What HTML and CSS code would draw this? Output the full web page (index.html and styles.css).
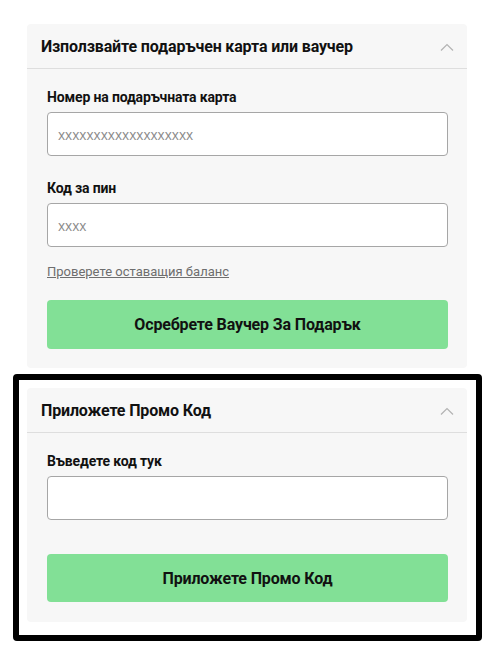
FILE: index.html
```html
<!DOCTYPE html>
<html lang="bg">
<head>
<meta charset="utf-8">
<link rel="stylesheet" href="styles.css">
</head>
<body>
<div class="page">
  <section class="card card-gift">
    <div class="card-header">
      <h2 class="card-title">Използвайте подаръчен карта или ваучер</h2>
      <svg class="chevron" width="14" height="8" viewBox="0 0 14 8"><path d="M1 7.5 L7 1.5 L13 7.5" fill="none" stroke="#b3b3b3" stroke-width="1.2"/></svg>
    </div>
    <div class="card-body">
      <label class="field-label">Номер на подаръчната карта</label>
      <div class="input"><span class="placeholder">xxxxxxxxxxxxxxxxxxx</span></div>
      <label class="field-label field-gap">Код за пин</label>
      <div class="input"><span class="placeholder">xxxx</span></div>
      <a class="balance-link" href="#">Проверете оставащия баланс</a>
      <button class="btn">Осребрете Ваучер За Подарък</button>
    </div>
  </section>
  <div class="highlight">
    <section class="card card-promo">
      <div class="card-header">
        <h2 class="card-title">Приложете Промо Код</h2>
        <svg class="chevron" width="14" height="8" viewBox="0 0 14 8"><path d="M1 7.5 L7 1.5 L13 7.5" fill="none" stroke="#b3b3b3" stroke-width="1.2"/></svg>
      </div>
      <div class="card-body">
        <label class="field-label">Въведете код тук</label>
        <div class="input"></div>
        <button class="btn btn-promo">Приложете Промо Код</button>
      </div>
    </section>
  </div>
</div>
</body>
</html>
```

FILE: styles.css
```css
* { box-sizing: border-box; }
html, body { margin: 0; padding: 0; background: #ffffff; }
body { font-family: Roboto, "Noto Sans", "Liberation Sans", sans-serif; color: #111; }

.page {
  width: 469px;
  margin-left: 13px;
  padding-top: 24px;
  display: flex;
  flex-direction: column;
  gap: 6px;
}

.card {
  background: #f7f7f7;
  border-radius: 4px;
  width: 440px;
}
.card-gift { margin-left: 14px; padding-bottom: 19px; }
.card-promo { padding-bottom: 20px; }

.card-header {
  height: 45px;
  border-bottom: 1px solid #dedede;
  display: flex;
  align-items: center;
  justify-content: space-between;
  padding: 0 13px 0 14px;
}
.card-title {
  margin: 0;
  font-size: 16px;
  font-weight: 700;
  color: #111;
  letter-spacing: -0.15px;
}
.chevron { display: block; margin-top: 1px; }

.card-body {
  padding: 19px 19px 0 20px;
  display: flex;
  flex-direction: column;
}

.field-label {
  font-size: 14px;
  font-weight: 700;
  line-height: 18px;
  color: #111;
  letter-spacing: -0.15px;
  margin-bottom: 6px;
}
.field-gap { margin-top: 23px; }

.input {
  height: 44px;
  background: #fff;
  border: 1px solid #a6a6a6;
  border-radius: 4px;
  display: flex;
  align-items: center;
  padding: 0 10px;
}
.placeholder {
  font-family: "Open Sans", "Noto Sans", sans-serif;
  font-size: 13.6px;
  color: #8a8a8a;
}

.balance-link {
  margin-top: 17px;
  font-size: 13px;
  line-height: 16px;
  color: #6e6e6e;
  text-decoration: underline;
  align-self: flex-start;
}

.btn {
  margin-top: 20px;
  height: 49px;
  border: none;
  border-radius: 4px;
  background: #82e096;
  font-family: Roboto, "Noto Sans", sans-serif;
  font-size: 16px;
  font-weight: 700;
  letter-spacing: -0.15px;
  color: #111;
  cursor: pointer;
}
.btn-promo { margin-top: 34px; height: 48px; }

.highlight {
  border: 6px solid #000;
  border-radius: 4px;
  padding: 8px 9px 13px 8px;
}
```
